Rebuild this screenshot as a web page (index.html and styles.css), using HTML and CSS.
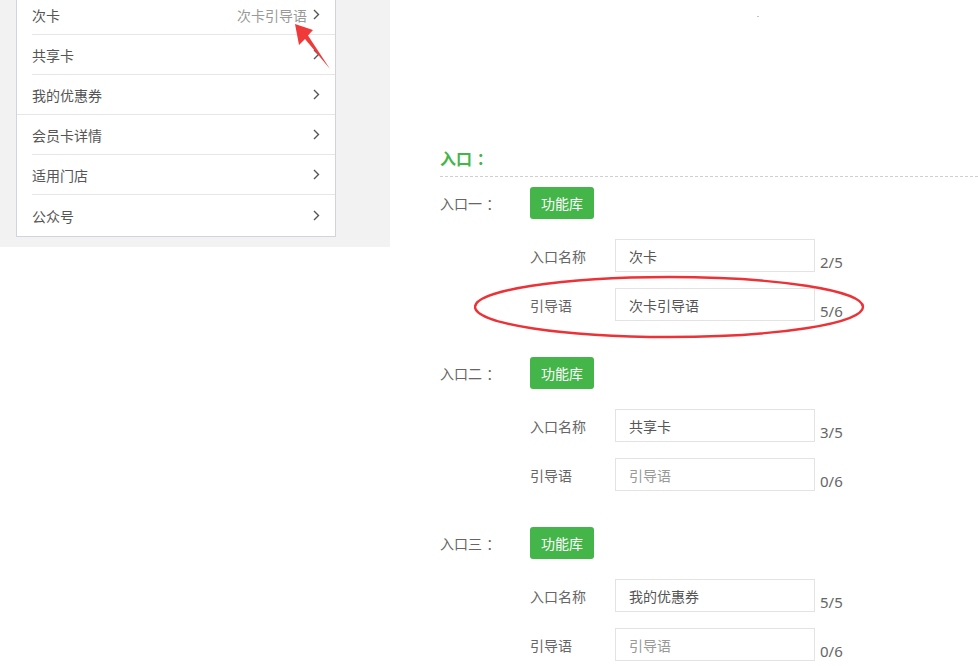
FILE: index.html
```html
<!DOCTYPE html>
<html lang="zh-CN">
<head>
<meta charset="utf-8">
<title>入口设置</title>
<link rel="stylesheet" href="styles.css">
</head>
<body>
<div class="page">
  <div class="preview">
    <div class="card">
      <div class="row"><span class="row-title">次卡</span><span class="row-right"><span class="row-hint">次卡引导语</span><svg class="chev" width="7" height="11" viewBox="0 0 7 11"><polyline points="1,1 5.5,5.5 1,10" fill="none" stroke="#555" stroke-width="1.4"/></svg></span></div>
      <div class="row"><span class="row-title">共享卡</span><span class="row-right"><svg class="chev" width="7" height="11" viewBox="0 0 7 11"><polyline points="1,1 5.5,5.5 1,10" fill="none" stroke="#555" stroke-width="1.4"/></svg></span></div>
      <div class="row row-full"><span class="row-title">我的优惠券</span><span class="row-right"><svg class="chev" width="7" height="11" viewBox="0 0 7 11"><polyline points="1,1 5.5,5.5 1,10" fill="none" stroke="#555" stroke-width="1.4"/></svg></span></div>
      <div class="row"><span class="row-title">会员卡详情</span><span class="row-right"><svg class="chev" width="7" height="11" viewBox="0 0 7 11"><polyline points="1,1 5.5,5.5 1,10" fill="none" stroke="#555" stroke-width="1.4"/></svg></span></div>
      <div class="row"><span class="row-title">适用门店</span><span class="row-right"><svg class="chev" width="7" height="11" viewBox="0 0 7 11"><polyline points="1,1 5.5,5.5 1,10" fill="none" stroke="#555" stroke-width="1.4"/></svg></span></div>
      <div class="row row-last"><span class="row-title">公众号</span><span class="row-right"><svg class="chev" width="7" height="11" viewBox="0 0 7 11"><polyline points="1,1 5.5,5.5 1,10" fill="none" stroke="#555" stroke-width="1.4"/></svg></span></div>
    </div>
  </div>

  <div class="settings">
    <div class="heading">入口<span class="colon">：</span></div>

    <div class="entry">
      <div class="entry-head"><span class="entry-label">入口一<span class="colon">：</span></span><button class="btn">功能库</button></div>
      <div class="field"><span class="field-label">入口名称</span><span class="input">次卡</span><span class="count">2/5</span></div>
      <div class="field"><span class="field-label">引导语</span><span class="input">次卡引导语</span><span class="count">5/6</span></div>
    </div>

    <div class="entry">
      <div class="entry-head"><span class="entry-label">入口二<span class="colon">：</span></span><button class="btn">功能库</button></div>
      <div class="field"><span class="field-label">入口名称</span><span class="input">共享卡</span><span class="count">3/5</span></div>
      <div class="field"><span class="field-label">引导语</span><span class="input placeholder">引导语</span><span class="count">0/6</span></div>
    </div>

    <div class="entry">
      <div class="entry-head"><span class="entry-label">入口三<span class="colon">：</span></span><button class="btn">功能库</button></div>
      <div class="field"><span class="field-label">入口名称</span><span class="input">我的优惠券</span><span class="count">5/5</span></div>
      <div class="field"><span class="field-label">引导语</span><span class="input placeholder">引导语</span><span class="count">0/6</span></div>
    </div>
  </div>
</div>

<svg class="annot-arrow" width="60" height="80" viewBox="0 0 60 80">
  <polygon points="5,4 23,10 18,15.5 40,49 15,19 9,25" fill="#f03a3a"/>
</svg>
<svg class="annot-ellipse" width="400" height="70" viewBox="0 0 400 70">
  <ellipse cx="195" cy="32" rx="194" ry="30" fill="none" stroke="#ec3237" stroke-width="2.4"/>
</svg>
<span class="speck"></span>
</body>
</html>
```
FILE: styles.css
```css
* { box-sizing: border-box; }
html, body { margin: 0; padding: 0; background: #fff; }
body {
  font-family: "Microsoft YaHei", "Noto Sans CJK SC", "Noto Sans", sans-serif;
  font-size: 14px;
  color: #666;
  position: relative;
  width: 978px;
  height: 666px;
  overflow: hidden;
}
.page { display: flex; align-items: flex-start; }

.preview {
  width: 390px;
  height: 247px;
  background: #f2f2f2;
  padding-left: 16px;
  flex: none;
}
.card {
  width: 320px;
  margin-top: -5px;
  background: #fff;
  border: 1px solid #d3d3dd;
  border-top: none;
}
.row {
  height: 40px;
  margin-left: 15px;
  padding-right: 15px;
  border-bottom: 1px solid #e6e6e6;
  display: flex;
  align-items: center;
  justify-content: space-between;
  color: #555;
}
.row-full { margin-left: 0; padding-left: 15px; }
.row-last { border-bottom: none; height: 41px; }
.row-right { display: flex; align-items: center; }
.row-hint { color: #999; margin-right: 6px; }
.chev { display: block; }

.colon {
  display: inline-block;
  width: 1em;
  padding-left: 0.3em;
}

.settings {
  flex: 1;
  padding-left: 50px;
  padding-top: 148px;
}
.heading {
  color: #43b549;
  font-weight: bold;
  font-size: 16px;
  height: 29px;
  line-height: 20px;
  border-bottom: 1px dashed #cfcfcf;
}
.entry { margin-top: 10px; margin-bottom: 36px; }
.entry + .entry { margin-top: 0; }
.entry-head {
  display: flex;
  align-items: center;
  height: 32px;
  margin-bottom: 20px;
}
.entry-label { width: 90px; color: #666; white-space: nowrap; }
.btn {
  font-family: inherit;
  font-size: 14px;
  color: #fff;
  background: #43b549;
  border: none;
  border-radius: 3px;
  width: 64px;
  height: 32px;
  padding: 0;
}
.field {
  display: flex;
  align-items: center;
  height: 33px;
  margin-left: 90px;
  margin-bottom: 16px;
}
.field:last-child { margin-bottom: 0; }
.field-label { width: 85px; color: #666; }
.input {
  width: 200px;
  height: 33px;
  border: 1px solid #e3e3e3;
  padding-left: 13px;
  display: flex;
  align-items: center;
  color: #555;
}
.input.placeholder { color: #999; }
.count {
  margin-left: 5px;
  padding-top: 12px;
  font-size: 15px;
  color: #666;
  font-family: "Microsoft YaHei", "Noto Sans", "Noto Sans CJK SC", sans-serif;
}

.annot-arrow { position: absolute; left: 290px; top: 20px; }
.annot-ellipse { position: absolute; left: 474px; top: 275px; }
.speck { position: absolute; left: 757px; top: 16px; width: 2px; height: 1px; background: #b8c4d8; }
```
